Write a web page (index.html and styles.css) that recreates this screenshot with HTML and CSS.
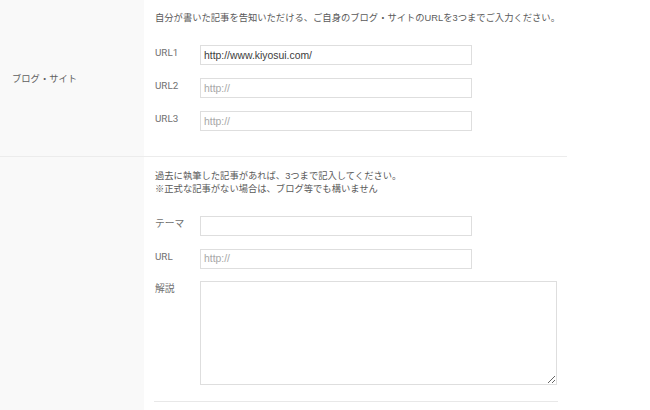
FILE: index.html
```html
<!DOCTYPE html>
<html lang="ja">
<head>
<meta charset="utf-8">
<link rel="stylesheet" href="styles.css">
</head>
<body>
<div class="table">
  <div class="row r1">
    <div class="th">ブログ・サイト</div>
    <div class="td">
      <p class="note">自分が書いた記事を告知いただける、ご自身のブログ・サイトのURLを3つまでご入力ください。</p>
      <div class="fields">
        <div class="field"><label class="lbl">URL1</label><input class="inp" type="text" value="http://www.kiyosui.com/"></div>
        <div class="field"><label class="lbl">URL2</label><input class="inp" type="text" placeholder="http://"></div>
        <div class="field"><label class="lbl">URL3</label><input class="inp" type="text" placeholder="http://"></div>
      </div>
    </div>
  </div>
  <div class="row r2">
    <div class="th"></div>
    <div class="td">
      <p class="note">過去に執筆した記事があれば、3つまで記入してください。<br>※正式な記事がない場合は、ブログ等でも構いません</p>
      <div class="fields">
        <div class="field"><label class="lbl">テーマ</label><input class="inp" type="text"></div>
        <div class="field"><label class="lbl">URL</label><input class="inp" type="text" placeholder="http://"></div>
        <div class="field"><label class="lbl">解説</label><textarea class="area"></textarea></div>
      </div>
      <div class="rule"></div>
    </div>
  </div>
</div>
</body>
</html>
```
FILE: styles.css
```css
html, body {
  margin: 0;
  padding: 0;
  background: #ffffff;
  height: 100%;
  overflow: hidden;
}
body {
  font-family: "Liberation Sans", "Noto Sans CJK JP", sans-serif;
  color: #555555;
}
.table {
  width: 567px;
}
.row {
  display: flex;
}
.r1 {
  border-bottom: 1px solid #ececec;
}
.th {
  width: 144px;
  flex: none;
  background: #f9f9f9;
  box-sizing: border-box;
  padding-left: 12px;
  display: flex;
  align-items: center;
  font-size: 9.3px;
  color: #5f5f5f;
}
.td {
  flex: 1;
  box-sizing: border-box;
  padding-left: 11px;
}
.r1 .td {
  padding-top: 12px;
  padding-bottom: 25px;
}
.r2 .td {
  padding-top: 13px;
  padding-bottom: 20px;
}
.r2 .th {
  min-height: 260px;
}
.note {
  margin: 0;
  font-size: 9.3px;
  line-height: 13px;
  color: #5a5a5a;
  white-space: nowrap;
}
.fields {
  margin-top: 20px;
  display: flex;
  flex-direction: column;
  gap: 13px;
}
.r2 .fields {
  gap: 12.5px;
}
.field {
  display: flex;
  align-items: flex-start;
}
.lbl {
  width: 45px;
  flex: none;
  font-family: Roboto, "Noto Sans CJK JP", sans-serif;
  font-size: 9.8px;
  line-height: 13px;
  padding-top: 1px;
  color: #707070;
}
.inp {
  width: 272px;
  height: 20px;
  box-sizing: border-box;
  margin: 0;
  border: 1px solid #dedede;
  border-radius: 0;
  padding: 0 3px;
  font-family: "Liberation Sans", "Noto Sans CJK JP", sans-serif;
  font-size: 10.4px;
  color: #3c3c3c;
  background: #ffffff;
  outline: none;
}
.inp::placeholder {
  color: #a8a8a8;
}
.area {
  width: 357px;
  height: 104px;
  box-sizing: border-box;
  margin: 0;
  border: 1px solid #dedede;
  border-radius: 0;
  padding: 3px;
  background: #ffffff;
  outline: none;
  resize: both;
}
.rule {
  margin-top: 16px;
  margin-left: -1px;
  width: 404px;
  height: 1px;
  background: #e8e8e8;
}
```
